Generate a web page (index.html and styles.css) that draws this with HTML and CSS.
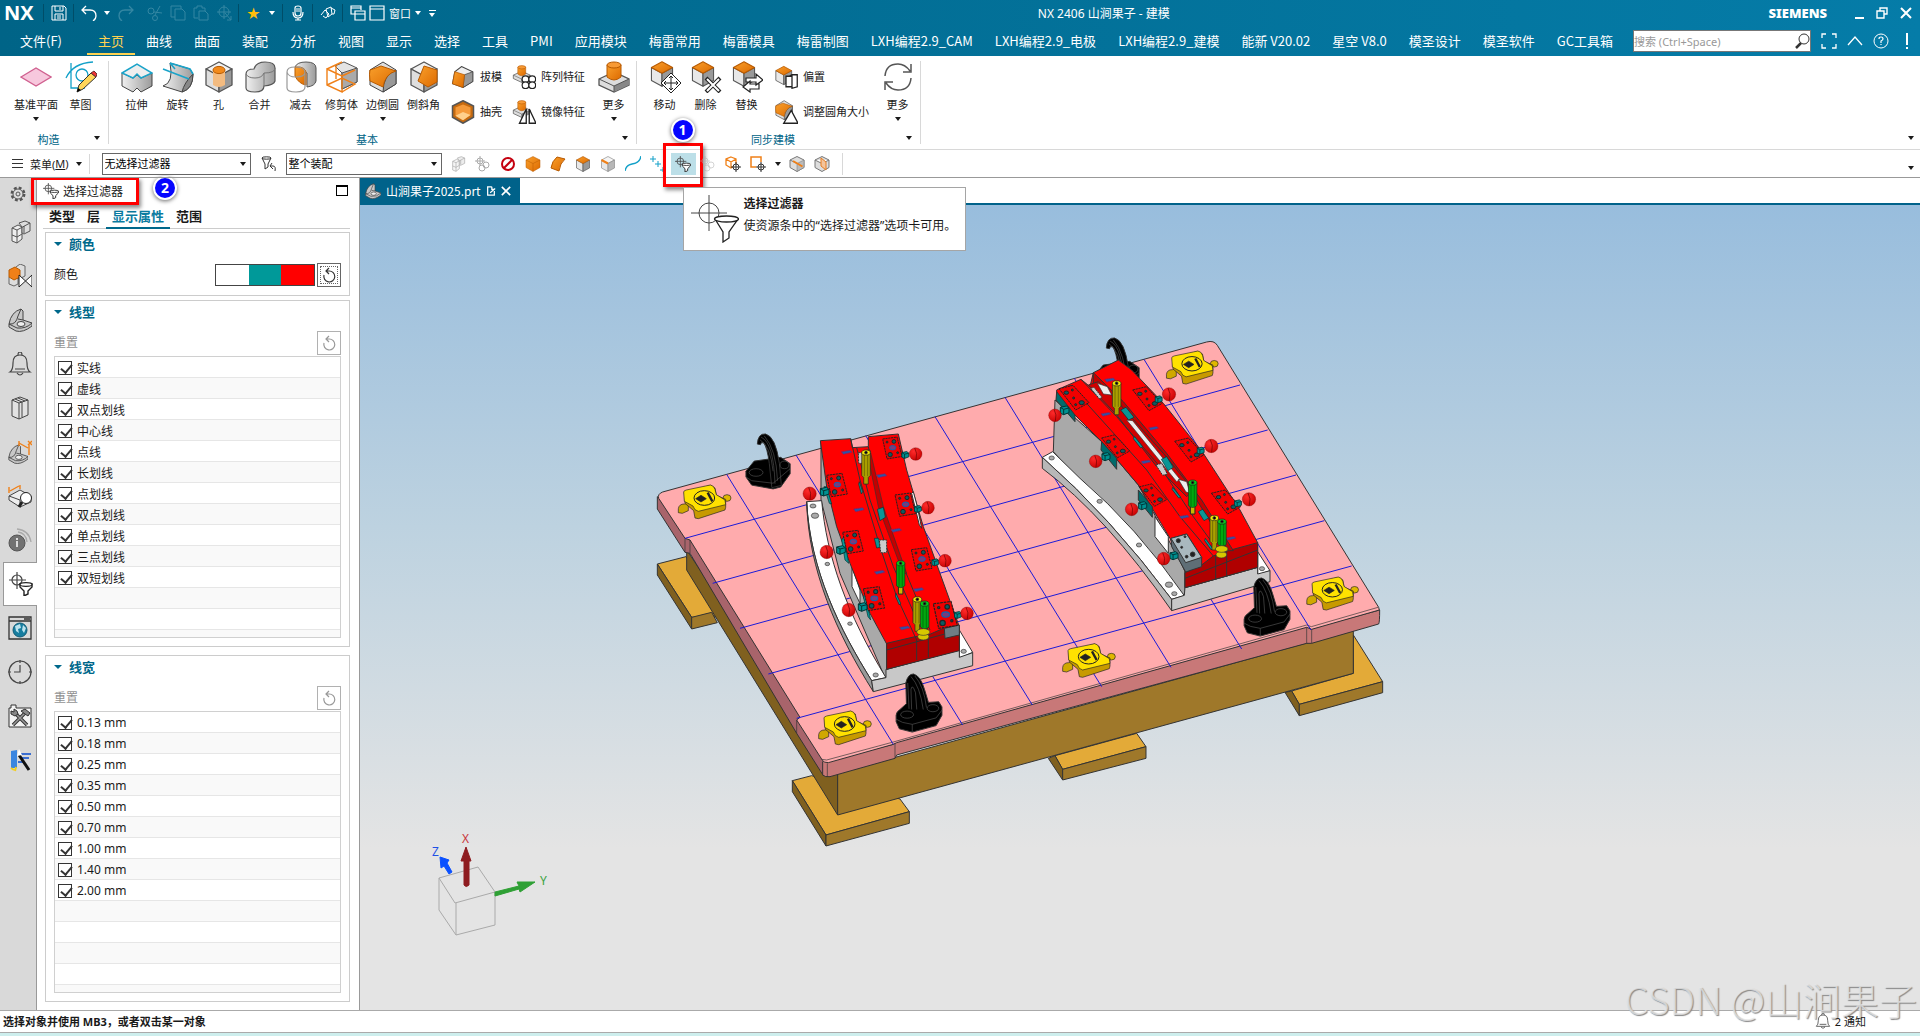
FILE: index.html
```html
<!DOCTYPE html>
<html lang="zh-CN">
<head>
    <meta charset="UTF-8">
    <meta name="viewport" content="width=device-width, initial-scale=1.0">
    <title>NX 2406 山涧果子 - 建模</title>
    <link rel="stylesheet" href="styles.css">
</head>
<body>
    <!-- Icon library -->
    <svg class="defs" aria-hidden="true">
        <defs>
            <linearGradient id="gOrange" x1="0" y1="0" x2="1" y2="1"><stop offset="0" stop-color="#f9a02c"/><stop offset="1" stop-color="#dd6a00"/></linearGradient>
            <linearGradient id="gGray" x1="0" y1="0" x2="1" y2="0"><stop offset="0" stop-color="#f0f0f0"/><stop offset="1" stop-color="#9b9b9b"/></linearGradient>
            <radialGradient id="gBall" cx=".35" cy=".3" r=".8"><stop offset="0" stop-color="#ff2a2a"/><stop offset="1" stop-color="#c40000"/></radialGradient>
        </defs>
        <symbol id="cube" viewBox="0 0 32 32"><g stroke="#555" stroke-width="1.3" stroke-linejoin="round"><path d="M16 1 29 8 16 15 3 8z" fill="#f1f1f1"/><path d="M3 8 16 15V31L3 24z" fill="#dedede"/><path d="M29 8 16 15V31L29 24z" fill="#999"/></g></symbol>
        <symbol id="cube-top" viewBox="0 0 32 32"><g stroke="#555" stroke-width="1.3" stroke-linejoin="round"><path d="M3 8 16 15V31L3 24z" fill="#e8e8e8"/><path d="M29 8 16 15V31L29 24z" fill="#999"/><path d="M16 1 29 8 16 15 3 8z" fill="url(#gOrange)" stroke="#b85a00"/></g></symbol>
        <symbol id="plane" viewBox="0 0 32 32"><path d="M1 16 16 7 31 16 16 25z" fill="#f7c8dd" stroke="#d0608f" stroke-width="1.3"/></symbol>
        <symbol id="sketch" viewBox="0 0 32 32"><path d="M6 2V27H20M1 17Q8 2 28 1" fill="none" stroke="#12a0c8" stroke-width="1.3"/><circle cx="17" cy="14" r="6" fill="none" stroke="#12a0c8" stroke-width="1.3"/><path d="M12 31 14 24 26 12 31 16 18 28z" fill="#ffd65a" stroke="#333"/><path d="M26 12 29 10 32 13 31 16z" fill="#e33" stroke="#633"/><path d="M12 31 13 27 16 29z"/></symbol>
        <symbol id="extrude" viewBox="0 0 32 32"><path d="M1 12 12 17 16 14 20 17 31 12V25L20 31 16 27 12 31 1 25z" fill="url(#gGray)" stroke="#444"/><path d="M1 12 16 3 31 12 20 17 16 13 12 17z" fill="#eee" stroke="#1aa3c9" stroke-width="1.5"/></symbol>
        <symbol id="revolve" viewBox="0 0 32 32"><path d="M8 2 28 8 31 13Q31 28 20 31L1 25Q12 22 8 2z" fill="url(#gGray)" stroke="#444"/><path d="M31 13Q31 28 20 31Q22 22 31 13z" fill="#888" stroke="#444"/><path d="M8 2 28 8 31 13M1 8 27 18M8 2 13 8" fill="none" stroke="#1aa3c9" stroke-width="1.6"/></symbol>
        <symbol id="hole" viewBox="0 0 32 32"><use href="#cube"/><path d="M10 9V24Q16 28 22 24V9z" fill="#f3bb80"/><ellipse cx="16" cy="9" rx="6" ry="3.6" fill="#f28a1c" stroke="#b85a00"/></symbol>
        <symbol id="unite" viewBox="0 0 32 32"><path d="M2 13Q2 8 10 8 12 1 21 1 31 1 31 7V20Q30 24 20 25 20 31 11 31 2 31 2 27z" fill="url(#gGray)" stroke="#555" stroke-width="1.2"/><path d="M2 13Q4 17 11 17 18 17 20 12 31 12 31 7" fill="none" stroke="#777"/><path d="M20 12V25" stroke="#777"/></symbol>
        <symbol id="subtract" viewBox="0 0 32 32"><path d="M10 6Q12 1 21 1 31 1 31 7V20Q30 25 22 26V12z" fill="url(#gGray)" stroke="#555"/><path d="M10 6Q22 5 21 14V24Q14 23 10 15z" fill="url(#gOrange)" stroke="#b85a00"/><path d="M10 6Q2 6 2 11V27Q2 31 11 31 20 31 20 26V11M2 11Q3 16 11 16 20 16 20 11 20 6 10 6" fill="none" stroke="#999" stroke-width="1.2"/></symbol>
        <symbol id="trim" viewBox="0 0 32 32"><path d="M9 5 18 1 31 7V21L16 28V12z" fill="#e4e4e4" stroke="#555"/><path d="M16 12 31 7V21L16 28z" fill="#aaa" stroke="#555"/><path d="M1 8 16 15V31L1 24zM1 8 16 1M16 15 29 9M1 24 16 17 29 23 16 31M10 5V18" fill="none" stroke="#f08018" stroke-width="1.4"/></symbol>
        <symbol id="blend" viewBox="0 0 32 32"><path d="M3 9 16 1 29 9V23L16 31 3 24z" fill="#dedede" stroke="#444"/><path d="M29 9V23L16 31Q16 14 29 9z" fill="#999" stroke="#444"/><path d="M3 9Q9 7 14 5L29 10Q18 13 16 26L3 20Q2 12 3 9z" fill="url(#gOrange)" stroke="#b85a00"/></symbol>
        <symbol id="chamfer" viewBox="0 0 32 32"><use href="#cube"/><path d="M16 5 29 9V21L20 26 10 20z" fill="url(#gOrange)" stroke="#b85a00"/></symbol>
        <symbol id="draft" viewBox="0 0 32 32"><path d="M14 2 29 9V22L16 30 2 25 5 9z" fill="#eee" stroke="#444" stroke-width="1.4"/><path d="M18 13 29 9V22L16 30z" fill="#999" stroke="#444"/><path d="M5 9 18 13 16 30 2 25z" fill="url(#gOrange)" stroke="#b85a00"/></symbol>
        <symbol id="shell" viewBox="0 0 32 32"><path d="M16 1 30 8V23L16 31 2 23V8z" fill="#c56a10" stroke="#555" stroke-width="2"/><path d="M6 10 16 6 26 10V20L16 27 6 21z" fill="#f59a3a"/><path d="M16 16 26 20 16 27 6 21z" fill="#ffd08c"/></symbol>
        <symbol id="boss" viewBox="0 0 32 32"><path d="M1 18 16 11 31 18V24L16 31 1 24z" fill="#ddd" stroke="#555" stroke-width="1.3"/><path d="M31 18V24L16 31V25z" fill="#888"/><path d="M1 18 16 25 31 18M16 25V31" fill="none" stroke="#555"/><path d="M9 4V16Q16 22 23 16V4z" fill="url(#gOrange)" stroke="#b85a00"/><ellipse cx="16" cy="4" rx="7" ry="3" fill="#f79a35" stroke="#b85a00"/></symbol>
        <symbol id="pattern" viewBox="0 0 32 32"><use href="#boss" x="0" y="0" width="26" height="24"/><g fill="#fff" stroke="#222" stroke-width="1.6"><circle cx="18" cy="19" r="4.500"/><circle cx="27" cy="19" r="4.500"/><circle cx="18" cy="27" r="4.500"/><circle cx="27" cy="27" r="4.500"/></g></symbol>
        <symbol id="mirror" viewBox="0 0 32 32"><use href="#boss" x="0" y="0" width="26" height="24"/><path d="M19 12V31H10zM23 12V31H32z" fill="#fff" stroke="#222" stroke-width="1.8"/></symbol>
        <symbol id="move" viewBox="0 0 32 32"><use href="#cube-top" width="26" height="26"/><path d="M22 12 32 22 22 32 12 22z" fill="#fff" stroke="#222"/><path d="M22 15V29M15 22H29M20 17 22 15 24 17M20 27 22 29 24 27M17 20 15 22 17 24M27 20 29 22 27 24" stroke="#222" fill="none"/></symbol>
        <symbol id="delete" viewBox="0 0 32 32"><use href="#cube-top" width="26" height="26"/><path d="M16 17 30 31M30 17 16 31" stroke="#222" stroke-width="4"/><path d="M17 18 29 30M29 18 17 30" stroke="#fff" stroke-width="2"/></symbol>
        <symbol id="replace" viewBox="0 0 32 32"><use href="#cube-top" width="26" height="26"/><path d="M15 17H25V13L32 19 25 24V21H15zM28 23H19V20L12 26 19 31V28H28z" fill="#fff" stroke="#222" stroke-width="1.2"/></symbol>
        <symbol id="offset" viewBox="0 0 32 32"><use href="#cube-top" width="26" height="28"/><path d="M16 15H24V29H16zM20 15 24 13H31V29L24 31V15" fill="#fff" stroke="#222" stroke-width="1.7"/></symbol>
        <symbol id="resize" viewBox="0 0 32 32"><use href="#blend" width="27" height="27"/><path d="M23 14 32 31H13z" fill="#fff" stroke="#222" stroke-width="1.8"/></symbol>
        <symbol id="more-sync" viewBox="0 0 32 32"><path d="M3 15Q4 3 16 3 23 3 28 10M29 3V11H21M29 17Q28 29 16 29 9 29 4 22M3 29V21H11" fill="none" stroke="#555" stroke-width="1.5"/></symbol>
        <symbol id="filter" viewBox="0 0 24 24"><path d="M8 0V17M0 8H17" stroke="#444" stroke-width="1.2"/><circle cx="8" cy="8" r="5" fill="none" stroke="#444" stroke-width="1.2"/><path d="M11 12V15L15 19V24L19 22V19L23 15V12z" fill="#fff" stroke="#222" stroke-width="1.4"/><ellipse cx="17" cy="12.500" rx="6" ry="1.800" fill="#fff" stroke="#222" stroke-width="1.2"/></symbol>
        <symbol id="filter-lg" viewBox="0 0 48 48"><path d="M18 0V36M0 18H36" stroke="#444"/><circle cx="18" cy="18" r="10" fill="none" stroke="#444"/><path d="M24 24 32 37V47L38 43V37L47 24z" fill="#fff" stroke="#222" stroke-width="1.300"/><ellipse cx="35.500" cy="24" rx="12" ry="3" fill="#fff" stroke="#222" stroke-width="1.300"/></symbol>
        <symbol id="reset" viewBox="0 0 16 16"><path d="M3 8A5.500 5.500 0 1 0 8 4H5M8 1 5 4 8 7" fill="none" stroke="currentColor" stroke-width="1.200"/></symbol>
        <symbol id="save" viewBox="0 0 16 16"><path d="M1 1H13L15 3V15H1zM4 1V6H12V1M9 2V5M4 15V9H12V15M6 11H10M6 13H10" fill="none" stroke="currentColor"/></symbol>
        <symbol id="undo" viewBox="0 0 16 16"><path d="M5 1 1 5 5 9M1 5H9Q15 5 15 11 15 14 12 16" fill="none" stroke="currentColor" stroke-width="1.3"/></symbol>
        <symbol id="cut" viewBox="0 0 16 16"><circle cx="4" cy="6" r="3" fill="none" stroke="currentColor"/><circle cx="8" cy="13" r="2.500" fill="none" stroke="currentColor"/><path d="M7 7 15 8M8 10 13 1" stroke="currentColor"/></symbol>
        <symbol id="copy" viewBox="0 0 16 16"><path d="M11 4V1H1V12H5M5 4H12L15 7V15H5z" fill="none" stroke="currentColor"/></symbol>
        <symbol id="paste" viewBox="0 0 16 16"><path d="M5 13H1V3H4V1H9V3H12V6M6 6H12L15 9V15H6z" fill="none" stroke="currentColor"/></symbol>
        <symbol id="target" viewBox="0 0 16 16"><circle cx="8" cy="7" r="5" fill="none" stroke="currentColor"/><path d="M8 0V14M1 7H15M9 8 15 15M15 11V15H11" stroke="currentColor" fill="none"/></symbol>
        <symbol id="mic" viewBox="0 0 16 16"><path d="M5 3Q5 1 8 1 11 1 11 3V8Q11 11 8 11 5 11 5 8zM3 7Q3 13 8 13 13 13 13 7M8 13V15M5 15H11M6 4H10M6 6H10" fill="none" stroke="currentColor" stroke-width="1.2"/></symbol>
        <symbol id="touch" viewBox="0 0 16 16"><path d="M1 10 5 5 9 9 6 13 3 11M6 4 11 2 12 9 8 12zM11 3 15 5 14 9 12 9" fill="none" stroke="currentColor"/></symbol>
        <symbol id="windows" viewBox="0 0 16 16"><path d="M5 9H1V1H11V5M1 3H11M5 6H15V15H5zM5 9H15" fill="none" stroke="currentColor" stroke-width="1.2"/></symbol>
        <symbol id="window" viewBox="0 0 16 16"><path d="M1 1H15V15H1zM1 4H15" fill="none" stroke="currentColor" stroke-width="1.2"/></symbol>
        <symbol id="restore" viewBox="0 0 12 12"><path d="M4 4V1H11V7H8M1 4H8V11H1z" fill="none" stroke="currentColor" stroke-width="1.4"/></symbol>
        <symbol id="close" viewBox="0 0 12 12"><path d="M1 1 11 11M11 1 1 11" stroke="currentColor" stroke-width="2"/></symbol>
        <symbol id="search" viewBox="0 0 16 16"><circle cx="10" cy="6" r="5" fill="none" stroke="#333"/><path d="M7 10 2 15" stroke="#333" stroke-width="2.500"/></symbol>
        <symbol id="full" viewBox="0 0 16 16"><path d="M1 5V1H5M11 1H15V5M15 11V15H11M5 15H1V11" fill="none" stroke="currentColor" stroke-width="1.3"/></symbol>
        <symbol id="up" viewBox="0 0 16 16"><path d="M1 12 8 4 15 12" fill="none" stroke="currentColor" stroke-width="1.3"/></symbol>
        <symbol id="help" viewBox="0 0 16 16"><circle cx="8" cy="8" r="7" fill="none" stroke="currentColor"/><path d="M6 6Q6 4 8 4 10 4 10 6 10 7 8 8V10M8 11V12" fill="none" stroke="currentColor" stroke-width="1.2"/></symbol>
        <symbol id="alert" viewBox="0 0 16 16"><path d="M8 0V12M8 14V16" stroke="currentColor" stroke-width="2"/></symbol>
        <symbol id="filter-back" viewBox="0 0 16 16"><path d="M1 2 4 8V13L7 11V8L10 2" fill="none" stroke="#333"/><ellipse cx="5.500" cy="2" rx="4.500" ry="1.200" fill="none" stroke="#333"/><path d="M11 7 9 10 12 13M9 10H12Q15 10 14 15" fill="none" stroke="#333"/></symbol>
        <symbol id="blocks" viewBox="0 0 24 24"><g stroke="#555" fill="#eee"><path d="M4 8 10 5 14 7V19L9 23 4 21z"/><path d="M11 3 17 1 22 3V11L16 14 14 13V7z" fill="#ddd"/><path d="M9 10V23M4 8 9 10 22 3M4 15 9 17 14 14M16 6V13" fill="none"/></g></symbol>
        <symbol id="links" viewBox="0 0 16 16"><g fill="none" stroke="#aaa"><circle cx="5" cy="5" r="3"/><path d="M5 0V10M0 5H10"/><circle cx="11" cy="9" r="3"/><circle cx="7" cy="12" r="3"/></g></symbol>
        <symbol id="forbid" viewBox="0 0 16 16"><circle cx="8" cy="8" r="6" fill="#fff" stroke="#c4000f" stroke-width="2"/><path d="M12 4 4 12" stroke="#c4000f" stroke-width="2"/></symbol>
        <symbol id="cube-orange" viewBox="0 0 32 32"><path d="M16 1 30 8V23L16 31 2 23V8z" fill="url(#gOrange)" stroke="#b85a00"/><path d="M2 8 16 15 30 8M16 15V31" fill="none" stroke="#b85a00"/></symbol>
        <symbol id="face" viewBox="0 0 16 16"><path d="M7 1 15 3Q10 7 9 15L1 12Q2 5 7 1z" fill="url(#gOrange)" stroke="#b85a00"/></symbol>
        <symbol id="edge" viewBox="0 0 32 32"><g opacity=".7"><use href="#cube"/></g><path d="M3 8 16 15" stroke="#f08018" stroke-width="4"/></symbol>
        <symbol id="curve" viewBox="0 0 16 16"><path d="M0 15Q1 9 7 8 15 7 16 0" fill="none" stroke="#12a0c8" stroke-width="1.4"/></symbol>
        <symbol id="points" viewBox="0 0 16 16"><path d="M3 0V6M0 3H6M8 5V11M5 8H11M13 11V16M10 14H16" stroke="#12a0c8"/></symbol>
        <symbol id="cube-target" viewBox="0 0 16 16"><path d="M6 1 11 3V9L6 12 1 9V3zM1 3 6 6 11 3M6 6V12" fill="none" stroke="#f08018" stroke-width="1.3"/><circle cx="11" cy="11" r="3" fill="#fff" stroke="#333"/><path d="M11 6V16M6 11H16" stroke="#333"/></symbol>
        <symbol id="box-target" viewBox="0 0 16 16"><path d="M6 11H1V1H11V6" fill="none" stroke="#f08018" stroke-width="1.5"/><circle cx="11" cy="11" r="3" fill="#fff" stroke="#333"/><path d="M11 6V16M6 11H16" stroke="#333"/></symbol>
        <symbol id="section" viewBox="0 0 32 32"><path d="M16 1 30 8V23L16 31 2 23V8z" fill="#ddd" stroke="#777" stroke-width="2"/><path d="M16 15 30 8V23L16 31z" fill="#bbb" stroke="#777"/><path d="M2 8 16 15" stroke="#777" stroke-width="2"/><path d="M8 10 27 21" stroke="#f08018" stroke-width="4"/></symbol>
        <symbol id="section2" viewBox="0 0 32 32"><path d="M16 1 30 8V23L16 31 2 23V8zM2 8 16 15 30 8" fill="#ddd" stroke="#777" stroke-width="2"/><path d="M14 4 24 12V28L14 20z" fill="#f4c49b" stroke="#e67e22" stroke-width="2"/></symbol>
        <symbol id="gear" viewBox="0 0 16 16"><circle cx="8" cy="8" r="6.200" fill="none" stroke="#555" stroke-width="2.500" stroke-dasharray="2.800 2.070"/><circle cx="8" cy="8" r="5" fill="#ddd" stroke="#555"/><circle cx="8" cy="8" r="2" fill="none" stroke="#555"/></symbol>
        <symbol id="constraint" viewBox="0 0 24 24"><path d="M1 13V20L6 22 10 20V13M8 3 12 0 17 2V12L11 15 6 13" fill="#ddd" stroke="#666"/><path d="M1 6 7 3 12 6V13L6 16 1 13z" fill="#f08018" stroke="#b85a00"/><path d="M11 11V23L24 11V23z" fill="#fff" stroke="#222"/></symbol>
        <symbol id="part" viewBox="0 0 24 24"><path d="M1 16Q3 4 13 1L15 3V12L24 15V18Q15 25 8 23L1 19z" fill="#c8c8c8" stroke="#444"/><path d="M1 16Q8 17 10 8L13 1M1 16 9 20Q18 21 24 15M10 11 15 12" fill="none" stroke="#444"/><ellipse cx="13" cy="16" rx="4" ry="2.500" fill="#eee" stroke="#444"/></symbol>
        <symbol id="bell" viewBox="0 0 24 24"><path d="M2 20Q5 18 5 11 5 3 12 3 19 3 19 11 19 18 22 20zM9 21Q12 25 15 21M10 3Q10 0 12 0 14 0 14 3M7 17H17" fill="none" stroke="#444" stroke-width="1.2"/></symbol>
        <symbol id="books" viewBox="0 0 24 24"><path d="M4 4 12 1 20 4V19L11 23 4 20zM4 4 11 7V23M7 3 14 6V21M10 2 17 5M11 7 20 4" fill="#e2e2e2" stroke="#444"/></symbol>
        <symbol id="part-dim" viewBox="0 0 24 24"><use href="#part" y="4" width="20" height="20"/><path d="M11 1V6M11 3 20 8M21 4V15M20 1 24 5M24 1 20 5" fill="none" stroke="#f08018" stroke-width="1.400"/></symbol>
        <symbol id="measure" viewBox="0 0 24 24"><path d="M1 12 12 6 23 12V18L12 23 1 16z" fill="#eee" stroke="#444"/><path d="M1 12 12 16V23" fill="none" stroke="#444"/><path d="M1 9V3M12 1V5M2 7 11 2" stroke="#f08018" fill="none" stroke-width="1.400"/><circle cx="18" cy="14" r="5.500" fill="#fff" stroke="#222"/><path d="M14 18 11 23" stroke="#222" stroke-width="3"/></symbol>
        <symbol id="info" viewBox="0 0 24 24"><circle cx="9" cy="15" r="8" fill="#727272" stroke="#555"/><path d="M9 10V12M9 13V19" stroke="#fff" stroke-width="1.500"/><path d="M10 4Q18 5 19 14M9 1Q21 2 23 14" fill="none" stroke="#aaa" stroke-width="1.300"/></symbol>
        <symbol id="web" viewBox="0 0 24 24"><path d="M1 1H23V23H1zM1 5H23M16 3H22" fill="none" stroke="#333" stroke-width="1.300"/><circle cx="12" cy="14" r="7" fill="#177d9f" stroke="#125d78"/><path d="M7 10 12 8 13 12 10 13 11 17 8 15zM15 9 18 12 16 17 14 14z" fill="#bde3ee"/></symbol>
        <symbol id="clock" viewBox="0 0 24 24"><circle cx="12" cy="12" r="11" fill="none" stroke="#444" stroke-width="1.200"/><path d="M12 5V12H6M12 0V3M12 21V24M0 12H3M21 12H24" fill="none" stroke="#444" stroke-width="1.200"/></symbol>
        <symbol id="tools" viewBox="0 0 24 24"><path d="M1 4H3V1H8V4H23V23H1z" fill="#f4f4f4" stroke="#333"/><path d="M5 21 17 9M8 10 19 21" stroke="#333" stroke-width="3.500"/><path d="M5 21 17 9M8 10 19 21" stroke="#999" stroke-width="1.500"/><path d="M3 7V10L7 12 10 10 9 7 6 5V8zM13 7 17 5 22 9 20 12 17 10z" fill="#888" stroke="#333"/></symbol>
        <symbol id="magic" viewBox="0 0 24 24"><path d="M3 3 9 2V20H3z" fill="#3b86e0"/><path d="M10 6H23M12 10H21M10 14H16" stroke="#3b6ed0" stroke-width="2"/><path d="M11 7 21 22" stroke="#111" stroke-width="3"/><path d="M3 20 6 22M8 19 7 23" stroke="#f2ce20" stroke-width="2"/><path d="M11 1 14 7 9 8z" fill="#fff"/></symbol>

        <!-- Parts of the model -->
        <symbol id="clamp" viewBox="0 0 160 110" overflow="visible"><g stroke="#222" stroke-width="2"><path d="M2 72Q4 58 20 58L32 56V78L14 86 2 84z" fill="#d0a800"/><ellipse cx="148" cy="40" rx="12" ry="10" fill="#e0b800"/><path d="M20 24 98 2 112 10 116 32 144 44V68L142 76 62 102 52 100 48 78 22 56z" fill="#c79a00"/><path d="M18 22Q18 18 26 16L98 1Q108 2 112 14L116 30 142 46 144 60 62 80Q50 78 46 64L20 50z" fill="#ffe100"/><ellipse cx="80" cy="40" rx="31" ry="22" fill="none" stroke-width="3"/><path d="M54 42 70 32 86 42 70 52z" fill="#222"/><path d="M90 24 104 50" stroke-width="7"/></g></symbol>
        <symbol id="hook" viewBox="0 0 150 190" overflow="visible"><path d="M2 120 28 88 112 76 142 96V128L112 170 88 176 20 164 2 138z"/><path d="M38 34Q40 0 64 2 96 10 108 96L114 165 84 172 76 96Q70 46 58 30 50 26 48 36z"/><g fill="none" stroke="#555" stroke-width="2"><ellipse cx="34" cy="124" rx="22" ry="12"/><ellipse cx="124" cy="100" rx="14" ry="12"/><path d="M2 138 20 150 88 158 142 112M50 12Q90 30 94 160M60 8Q98 50 102 150M46 20Q80 40 88 120"/></g></symbol>
        <symbol id="hook-front" viewBox="0 0 150 190" overflow="visible"><path d="M0 130Q0 120 12 112L32 94 30 30Q36 2 54 2 76 8 88 50L100 90 132 88 142 104V130L124 162 50 182 10 172 0 150z"/><g fill="none" stroke="#555" stroke-width="2"><ellipse cx="34" cy="128" rx="20" ry="11"/><ellipse cx="114" cy="108" rx="18" ry="11"/><path d="M0 142 20 152 50 158 124 138 142 114M50 158V182M36 30 40 110M46 10Q74 40 84 112M58 8Q86 40 94 106M48 112 46 50Q50 30 60 60L64 112"/></g></symbol>
        <symbol id="plate" viewBox="0 0 64 72" overflow="visible"><path d="M0 6 46 0 62 62 14 70z" fill="#f00000" stroke="#222" stroke-width="3" stroke-dasharray="7 2"/><g fill="#0c5c62" stroke="#222"><circle cx="36" cy="14" r="6"/><circle cx="14" cy="16" r="3"/><circle cx="24" cy="56" r="7"/><circle cx="48" cy="50" r="3"/></g><ellipse cx="32" cy="34" rx="10" ry="7" fill="#7a3c7c" stroke="#1262b0" stroke-width="3"/></symbol>
        <symbol id="plate-r" viewBox="0 0 92 76" overflow="visible"><path d="M0 10 42 0 90 52 50 74z" fill="#f00000" stroke="#222" stroke-width="3" stroke-dasharray="7 2"/><g fill="#0c5c62" stroke="#222"><ellipse cx="22" cy="22" rx="7" ry="5"/><circle cx="40" cy="14" r="3"/><circle cx="44" cy="38" r="3"/><ellipse cx="68" cy="52" rx="8" ry="6"/><circle cx="50" cy="58" r="3"/></g></symbol>
        <symbol id="pin-y" viewBox="0 0 30 110" overflow="visible"><path d="M2 8V78L8 84V104H22V84L28 78V8z" fill="#aaa000" stroke="#222" stroke-width="2"/><path d="M10 12V80M20 12V80" stroke="#5c5800" stroke-width="2"/><ellipse cx="15" cy="8" rx="13" ry="8" fill="#f0ea00" stroke="#222" stroke-width="2"/><circle cx="15" cy="8" r="4"/></symbol>
        <symbol id="pin-g" viewBox="0 0 30 110" overflow="visible"><path d="M8 80H22V104H8z" fill="#c8b800" stroke="#222"/><path d="M2 8V78Q15 90 28 78V8z" fill="#00a810" stroke="#222" stroke-width="2"/><path d="M10 12V80M20 12V80" stroke="#005c08" stroke-width="2"/><ellipse cx="15" cy="8" rx="13" ry="8" fill="#00d018" stroke="#222" stroke-width="2"/><circle cx="15" cy="8" r="4"/></symbol>
        <symbol id="knob" viewBox="0 0 42 42" overflow="visible"><circle cx="21" cy="21" r="20" fill="url(#gBall)" stroke="#700" stroke-width="1"/><path d="M18 2Q28 18 22 40" fill="none" stroke="#600" stroke-width="2"/></symbol>
        <symbol id="block" viewBox="0 0 30 30" overflow="visible"><path d="M2 6 20 2 28 8V22L12 28 2 24z" fill="#009090" stroke="#033"/><path d="M2 6 12 12 28 8M12 12V28" fill="none" stroke="#033"/></symbol>
        <symbol id="tag" viewBox="0 0 32 12" overflow="visible"><path d="M0 4 26 0 32 6 6 12z" fill="#2a55a8" stroke="#9a1850" stroke-dasharray="4 2"/></symbol>
    </svg>

    <div class="app">
        <header class="header">
            <div class="title-row">
                <strong class="nx">NX</strong>
                <div class="quick">
                    <i class="sep"></i>
                    <button aria-label="保存"><svg><use href="#save"/></svg></button>
                    <i class="sep"></i>
                    <button aria-label="撤消"><svg><use href="#undo"/></svg></button>
                    <button class="drop" aria-label="撤消列表"></button>
                    <button class="dim flip" aria-label="重做"><svg><use href="#undo"/></svg></button>
                    <button class="dim" aria-label="剪切"><svg><use href="#cut"/></svg></button>
                    <button class="dim" aria-label="复制"><svg><use href="#copy"/></svg></button>
                    <button class="dim" aria-label="粘贴"><svg><use href="#paste"/></svg></button>
                    <button class="dim" aria-label="定位"><svg><use href="#target"/></svg></button>
                    <i class="sep"></i>
                    <button class="star" aria-label="收藏">★</button>
                    <button class="drop" aria-label="收藏列表"></button>
                    <i class="sep"></i>
                    <button aria-label="语音"><svg><use href="#mic"/></svg></button>
                    <i class="sep"></i>
                    <button aria-label="触控"><svg><use href="#touch"/></svg></button>
                    <i class="sep"></i>
                    <button aria-label="切换窗口"><svg><use href="#windows"/></svg></button>
                    <button class="window-btn"><svg><use href="#window"/></svg>窗口</button>
                    <button class="drop" aria-label="窗口列表"></button>
                    <button class="drop over" aria-label="自定义"></button>
                </div>
                <div class="title">NX 2406 山涧果子 - 建模</div>
                <strong class="siemens">SIEMENS</strong>
                <div class="win-btns">
                    <button class="min" aria-label="最小化"></button>
                    <button aria-label="还原"><svg><use href="#restore"/></svg></button>
                    <button aria-label="关闭"><svg><use href="#close"/></svg></button>
                </div>
            </div>
            <div class="menu-row">
                <nav class="menu">
                    <a href="#" class="file">文件(F)</a>
                    <a href="#" class="active">主页</a>
                    <a href="#">曲线</a>
                    <a href="#">曲面</a>
                    <a href="#">装配</a>
                    <a href="#">分析</a>
                    <a href="#">视图</a>
                    <a href="#">显示</a>
                    <a href="#">选择</a>
                    <a href="#">工具</a>
                    <a href="#">PMI</a>
                    <a href="#">应用模块</a>
                    <a href="#">梅雷常用</a>
                    <a href="#">梅雷模具</a>
                    <a href="#">梅雷制图</a>
                    <a href="#">LXH编程2.9_CAM</a>
                    <a href="#">LXH编程2.9_电极</a>
                    <a href="#">LXH编程2.9_建模</a>
                    <a href="#">能新 V20.02</a>
                    <a href="#">星空 V8.0</a>
                    <a href="#">模圣设计</a>
                    <a href="#">模圣软件</a>
                    <a href="#">GC工具箱</a>
                </nav>
                <div class="search">
                    <input type="text" aria-label="搜索" placeholder="搜索 (Ctrl+Space)">
                    <svg><use href="#search"/></svg>
                </div>
                <div class="menu-btns">
                    <button aria-label="全屏"><svg><use href="#full"/></svg></button>
                    <button aria-label="收起功能区"><svg><use href="#up"/></svg></button>
                    <button aria-label="帮助"><svg><use href="#help"/></svg></button>
                    <button aria-label="提示"><svg><use href="#alert"/></svg></button>
                </div>
            </div>
        </header>

        <div class="ribbon">
            <section class="group">
                <div class="tools">
                    <button class="tool wide arrow"><svg><use href="#plane"/></svg>基准平面</button>
                    <button class="tool"><svg><use href="#sketch"/></svg>草图</button>
                </div>
                <h2>构造</h2>
            </section>
            <section class="group">
                <div class="tools">
                    <button class="tool"><svg><use href="#extrude"/></svg>拉伸</button>
                    <button class="tool"><svg><use href="#revolve"/></svg>旋转</button>
                    <button class="tool"><svg><use href="#hole"/></svg>孔</button>
                    <button class="tool"><svg><use href="#unite"/></svg>合并</button>
                    <button class="tool"><svg><use href="#subtract"/></svg>减去</button>
                    <button class="tool arrow"><svg><use href="#trim"/></svg>修剪体</button>
                    <button class="tool arrow"><svg><use href="#blend"/></svg>边倒圆</button>
                    <button class="tool"><svg><use href="#chamfer"/></svg>倒斜角</button>
                    <div class="stack">
                        <button><svg><use href="#draft"/></svg>拔模</button>
                        <button><svg><use href="#shell"/></svg>抽壳</button>
                    </div>
                    <div class="stack">
                        <button><svg><use href="#pattern"/></svg>阵列特征</button>
                        <button><svg><use href="#mirror"/></svg>镜像特征</button>
                    </div>
                    <button class="tool more arrow"><svg><use href="#boss"/></svg>更多</button>
                </div>
                <h2>基本</h2>
            </section>
            <section class="group">
                <div class="tools">
                    <button class="tool"><svg><use href="#move"/></svg>移动</button>
                    <button class="tool"><svg><use href="#delete"/></svg>删除</button>
                    <button class="tool"><svg><use href="#replace"/></svg>替换</button>
                    <div class="stack">
                        <button><svg><use href="#offset"/></svg>偏置</button>
                        <button><svg><use href="#resize"/></svg>调整圆角大小</button>
                    </div>
                    <button class="tool more arrow"><svg><use href="#more-sync"/></svg>更多</button>
                </div>
                <h2>同步建模</h2>
            </section>
            <div class="ribbon-end"></div>
        </div>

        <div class="filter-bar">
            <button class="menu-btn"><span class="lines"></span>菜单(<u>M</u>)</button>
            <div class="pick first">
                <select aria-label="类型过滤器"><option>无选择过滤器</option></select>
            </div>
            <button aria-label="重置过滤器"><svg><use href="#filter-back"/></svg></button>
            <div class="pick">
                <select aria-label="选择范围"><option>整个装配</option></select>
            </div>
            <div class="filter-icons">
                <button class="off" aria-label="组件"><svg><use href="#blocks"/></svg></button>
                <button aria-label="链接"><svg><use href="#links"/></svg></button>
                <button aria-label="禁止"><svg><use href="#forbid"/></svg></button>
                <button aria-label="实体"><svg><use href="#cube-orange"/></svg></button>
                <button aria-label="片体"><svg><use href="#face"/></svg></button>
                <button aria-label="面"><svg><use href="#cube-top"/></svg></button>
                <button aria-label="边"><svg><use href="#edge"/></svg></button>
                <button aria-label="曲线"><svg><use href="#curve"/></svg></button>
                <button aria-label="点"><svg><use href="#points"/></svg></button>
                <div class="filter-on">
                    <button aria-label="选择过滤器"><svg><use href="#filter"/></svg></button>
                    <div class="mark"></div>
                    <div class="badge">1</div>
                    <div class="tooltip">
                        <svg><use href="#filter-lg"/></svg>
                        <div>
                            <strong>选择过滤器</strong>
                            <p>使资源条中的“选择过滤器”选项卡可用。</p>
                        </div>
                    </div>
                </div>
                <button class="off" aria-label="取消选择"><svg><use href="#links"/></svg></button>
                <button aria-label="定向"><svg><use href="#cube-target"/></svg></button>
                <button aria-label="框选"><svg><use href="#box-target"/></svg></button>
                <button class="drop" aria-label="框选列表"></button>
                <button aria-label="剖切"><svg><use href="#section"/></svg></button>
                <button aria-label="编辑截面"><svg><use href="#section2"/></svg></button>
            </div>
        </div>

        <main class="main">
            <nav class="rail">
                <button aria-label="设置"><svg><use href="#gear"/></svg></button>
                <button aria-label="装配导航器"><svg><use href="#blocks"/></svg></button>
                <button aria-label="约束导航器"><svg><use href="#constraint"/></svg></button>
                <button aria-label="部件导航器"><svg><use href="#part"/></svg></button>
                <button aria-label="通知"><svg><use href="#bell"/></svg></button>
                <button aria-label="重用库"><svg><use href="#books"/></svg></button>
                <button aria-label="PMI 导航器"><svg><use href="#part-dim"/></svg></button>
                <button aria-label="测量"><svg><use href="#measure"/></svg></button>
                <button aria-label="信息"><svg><use href="#info"/></svg></button>
                <button class="active" aria-label="选择过滤器"><svg><use href="#filter"/></svg></button>
                <button aria-label="浏览器"><svg><use href="#web"/></svg></button>
                <button aria-label="历史记录"><svg><use href="#clock"/></svg></button>
                <button aria-label="加工向导"><svg><use href="#tools"/></svg></button>
                <button aria-label="外挂"><svg><use href="#magic"/></svg></button>
            </nav>

            <aside class="panel">
                <div class="panel-head">
                    <svg><use href="#filter"/></svg>
                    <span>选择过滤器</span>
                    <button class="max" aria-label="最大化"></button>
                    <div class="mark"></div>
                    <div class="badge">2</div>
                </div>
                <nav class="tabs">
                    <a href="#">类型</a>
                    <a href="#">层</a>
                    <a href="#" class="active">显示属性</a>
                    <a href="#">范围</a>
                </nav>
                <section class="box">
                    <h3>颜色</h3>
                    <div class="row">
                        <span>颜色</span>
                        <div class="swatch"><i></i><i class="teal"></i><i class="red"></i></div>
                        <button class="reset focus" aria-label="重置颜色"><svg><use href="#reset"/></svg></button>
                    </div>
                </section>
                <section class="box fill">
                    <h3>线型</h3>
                    <div class="row off">
                        <span>重置</span>
                        <button class="reset" disabled aria-label="重置线型"><svg><use href="#reset"/></svg></button>
                    </div>
                    <div class="list">
                        <label><input type="checkbox" checked>实线</label>
                        <label><input type="checkbox" checked>虚线</label>
                        <label><input type="checkbox" checked>双点划线</label>
                        <label><input type="checkbox" checked>中心线</label>
                        <label><input type="checkbox" checked>点线</label>
                        <label><input type="checkbox" checked>长划线</label>
                        <label><input type="checkbox" checked>点划线</label>
                        <label><input type="checkbox" checked>双点划线</label>
                        <label><input type="checkbox" checked>单点划线</label>
                        <label><input type="checkbox" checked>三点划线</label>
                        <label><input type="checkbox" checked>双短划线</label>
                    </div>
                </section>
                <section class="box fill">
                    <h3>线宽</h3>
                    <div class="row off">
                        <span>重置</span>
                        <button class="reset" disabled aria-label="重置线宽"><svg><use href="#reset"/></svg></button>
                    </div>
                    <div class="list">
                        <label><input type="checkbox" checked>0.13 mm</label>
                        <label><input type="checkbox" checked>0.18 mm</label>
                        <label><input type="checkbox" checked>0.25 mm</label>
                        <label><input type="checkbox" checked>0.35 mm</label>
                        <label><input type="checkbox" checked>0.50 mm</label>
                        <label><input type="checkbox" checked>0.70 mm</label>
                        <label><input type="checkbox" checked>1.00 mm</label>
                        <label><input type="checkbox" checked>1.40 mm</label>
                        <label><input type="checkbox" checked>2.00 mm</label>
                    </div>
                </section>
            </aside>

            <section class="view">
                <div class="doc-tabs">
                    <div class="doc-tab">
                        <svg><use href="#part"/></svg>
                        <span>山涧果子2025.prt</span>
                        <svg class="small" viewBox="0 0 12 12"><path d="M7 1H2V11H10V6M7 1V4H10M5 8 11 3" fill="none" stroke="#fff" stroke-width="1.500"/></svg>
                        <button aria-label="关闭文件"><svg class="small"><use href="#close"/></svg></button>
                    </div>
                </div>
                <div class="canvas">
                    <svg class="model" viewBox="360 205 1560 805" preserveAspectRatio="xMidYMid meet" role="img" aria-label="模型">
                        <g transform="translate(640 320) scale(.33333)" stroke="#333" stroke-width="3" stroke-linejoin="round">
                            <!-- feet -->
                            <g fill="#e3aa38">
                                <path d="M52 732 138 710 250 890 155 892z"/>
                                <path d="M457 1382 515 1367 780 1437 808 1475 558 1545z"/>
                                <path d="M1245 1307 1490 1240 1518 1280 1268 1348z"/>
                                <path d="M1955 1113 2140 1060V945L2228 1085 1978 1153z"/>
                            </g>
                            <g fill="#80601f">
                                <path d="M52 732 155 892V927L52 765z"/>
                                <path d="M457 1382 558 1545V1578L457 1415z"/>
                                <path d="M1225 1315 1245 1307 1268 1348V1380z"/>
                                <path d="M1935 1117 1955 1113 1978 1153V1187z"/>
                                <path d="M140 690 593 1365V1485L140 750z"/>
                            </g>
                            <g fill="#9f782a">
                                <path d="M155 892 215 877 232 908 155 927z"/>
                                <path d="M558 1545 808 1475V1510L558 1578z"/>
                                <path d="M1268 1348 1518 1280V1315L1268 1380z"/>
                                <path d="M1978 1153 2228 1085V1118L1978 1187z"/>
                                <path d="M593 1360V1485L2140 1060V930z"/>
                            </g>
                            <!-- table -->
                            <path d="M52 530V567L135 697 150 700 470 1240 550 1367 600 1320 200 640z" fill="#a8646b"/>
                            <path d="M548 1325V1365Q555 1372 570 1370L765 1315 770 1305 2000 970H2015L2216 912Q2219 908 2219 870L2015 925 2000 920 770 1265 760 1273z" fill="#c87878"/>
                            <path d="M68 516 1700 66Q1722 60 1732 76L2216 862 2218 870 2015 928 2000 922 770 1268 760 1273 565 1328Q552 1328 548 1322L470 1200 480 1192 150 660 135 655 56 535Q52 522 68 516z" fill="#ffabad"/>
                            <path d="M545 1318 560 1320 760 1266 2000 915 2014 920 2214 862M765 1270V1315M2000 922V970M2015 928V970M470 1200V1240M135 655V697M150 660V700M562 1330V1370" fill="none" stroke-width="2"/>
                            <g fill="none" stroke="#1a1ad8" stroke-width="3">
                                <path d="M260 463 760 1273M468 405 968 1215M677 347 1177 1155M885 290 1385 1100M1095 232 1593 1042M1303 175 1805 987M1512 118 2013 930"/>
                                <path d="M135 655 1800 195M218 790 1883 330M300 925 1968 465M385 1062 2053 602M470 1195 2135 738"/>
                            </g>

                            <use href="#hook" x="312" y="340" width="150" height="180"/>
                            <use href="#hook" x="1359" y="52" width="150" height="180"/>

                            <!-- left fixture -->
                            <path d="M543 365V540L600 760 735 1073 742 1065V960L640 740z" fill="#a9a9a9"/>
                            <path d="M500 545 545 542C560 710 620 880 738 1073L695 1082C600 930 510 750 500 545z" fill="#fff"/>
                            <path d="M500 545C510 750 600 930 695 1082L700 1115C590 940 505 750 500 545z" fill="#999"/>
                            <path d="M958 930 998 997 958 1015z" fill="#fff"/>
                            <path d="M695 1082 738 1073V1048L958 990V1012L998 998V1037L700 1115z" fill="#c8c8c8"/>
                            <path d="M636 740 660 810V850L636 800z" fill="#fff"/>
                            <path d="M541 362 632 356 637 383 685 380V350L775 342 800 450 850 620 900 760 958 920V990L740 1048V972L690 880 630 730 590 620 560 500z" fill="#f00"/>
                            <path d="M740 970 825 950 865 945 910 925 958 947V992L740 1048z" fill="#b00000"/>
                            <path d="M632 356 660 480 720 680 770 830 830 960M650 383 690 540 760 740 840 920M685 380 720 540 790 740 870 930M740 990 958 930M830 960V1020M865 945V1012" fill="none"/>
                            <path d="M690 390 730 560 800 760 790 762 715 560 680 390z" fill="#c40000" stroke-width="2"/>
                            <path d="M820 515 832 560 845 625 838 615 815 520z" fill="#fff"/>
                            <path d="M913 925 958 915V945L915 955z" fill="#6f7d85"/>
                            <g fill="#0a9696" stroke="#033" stroke-width="2">
                                <path d="M658 485 668 515 664 522 656 492zM712 568 730 562 736 592 720 602zM703 655 716 655 720 682 710 684zM768 820 782 850 778 855 766 828z"/>
                                <path d="M560 500 575 552 568 550 552 500zM612 650 626 730 615 720 605 660zM676 820 692 900 684 890 670 830z"/>
                            </g>
                            <path d="M655 398H668V430H656zM718 660H740V698H722z" fill="#ccc" stroke-dasharray="6 3"/>
                            <use href="#plate" x="560" y="460" width="64" height="72"/>
                            <use href="#plate" x="608" y="631" width="64" height="72"/>
                            <use href="#plate" x="670" y="800" width="66" height="74"/>
                            <use href="#plate" x="728" y="345" width="60" height="80"/>
                            <use href="#plate" x="765" y="519" width="64" height="72"/>
                            <use href="#plate" x="813" y="683" width="66" height="72"/>
                            <use href="#plate" x="880" y="843" width="74" height="86"/>
                            <use href="#tag" x="604" y="391" width="32" height="12"/>
                            <use href="#tag" x="641" y="563" width="32" height="12"/>
                            <use href="#tag" x="703" y="751" width="32" height="12"/>
                            <use href="#tag" x="778" y="918" width="32" height="12"/>
                            <use href="#tag" x="709" y="461" width="32" height="12"/>
                            <use href="#tag" x="753" y="625" width="32" height="12"/>
                            <use href="#tag" x="820" y="803" width="32" height="12"/>
                            <use href="#block" x="539" y="500" width="30" height="30"/>
                            <use href="#block" x="588" y="675" width="30" height="30"/>
                            <use href="#block" x="653" y="846" width="30" height="30"/>
                            <use href="#block" x="784" y="390" width="24" height="30"/>
                            <use href="#block" x="822" y="552" width="24" height="30"/>
                            <use href="#block" x="874" y="712" width="24" height="30"/>
                            <use href="#block" x="942" y="870" width="24" height="30"/>
                            <use href="#knob" x="488" y="500" width="42" height="42"/>
                            <use href="#knob" x="539" y="675" width="42" height="42"/>
                            <use href="#knob" x="605" y="849" width="42" height="42"/>
                            <use href="#knob" x="807" y="382" width="40" height="40"/>
                            <use href="#knob" x="844" y="543" width="40" height="40"/>
                            <use href="#knob" x="895" y="702" width="40" height="40"/>
                            <use href="#knob" x="961" y="860" width="40" height="40"/>
                            <use href="#pin-y" x="663" y="390" width="30" height="108"/>
                            <use href="#pin-g" x="766" y="722" width="32" height="106"/>
                            <use href="#pin-y" x="817" y="830" width="30" height="110"/>
                            <use href="#pin-g" x="838" y="843" width="32" height="110"/>
                            <g fill="#d6c800" stroke-width="2"><ellipse cx="850" cy="950" rx="17" ry="10"/><ellipse cx="850" cy="936" rx="20" ry="10"/></g>
                            <g fill="#aaa" stroke-width="2"><ellipse cx="519" cy="558" rx="9" ry="6"/><ellipse cx="525" cy="587" rx="11" ry="8"/><ellipse cx="562" cy="732" rx="7" ry="5"/><ellipse cx="630" cy="911" rx="7" ry="5"/><ellipse cx="707" cy="1065" rx="8" ry="6"/><ellipse cx="971" cy="994" rx="8" ry="6"/></g>

                            <!-- right fixture -->
                            <g transform="translate(1140 0)">
                                <path d="M105 240 100 395 495 830V750L355 495 245 365z" fill="#a9a9a9"/>
                                <path d="M67 412 98 395 180 475Q350 620 493 827L455 838Q270 590 67 412z" fill="#fff"/>
                                <path d="M67 412V445Q260 590 455 872V838Q270 590 67 412z" fill="#b8b8b8"/>
                                <path d="M713 695 750 752 713 765z" fill="#fff"/>
                                <path d="M455 838 493 826 495 803 713 742V762L750 752V785L455 872z" fill="#c8c8c8"/>
                                <path d="M405 590 445 650V700L405 650z" fill="#fff"/>
                                <path d="M110 210 183 178 210 200 220 158 295 120 335 150 430 250 550 400 660 570 713 668V742L495 803V755L450 655 355 495 245 365 165 285 110 240z" fill="#f00"/>
                                <path d="M495 758 545 735 580 708 625 692 713 668V742L495 803z" fill="#b00000"/>
                                <path d="M220 158V190L300 262 430 400 530 540 625 692H640L545 540 440 400 310 245z" fill="#c40000"/>
                                <path d="M205 195 235 185 275 225 430 400 520 510 500 530 410 440 290 285z" fill="#d00000"/>
                                <path d="M232 190 262 200 275 225 250 222zM320 300 338 302 480 478 470 485zM475 478 500 485 510 520 498 516z" fill="#eee" stroke-width="2"/>
                                <path d="M150 195 245 300 380 450 480 590 580 708M183 178 290 290 420 440 520 590 600 700M495 775 713 690M587 705V778M620 692V770" fill="none"/>
                                <path d="M212 205 222 202 246 232 238 236zM408 435 425 430 442 462 428 466z" fill="#ccc" stroke-dasharray="6 3"/>
                                <g fill="#0a9696" stroke="#033" stroke-width="2">
                                    <path d="M302 270 318 262 342 292 326 300zM424 418 440 410 460 442 444 452zM535 575 548 568 566 594 552 602z"/>
                                    <path d="M344 350 368 380 362 384 340 356zM458 502 482 532 476 534 456 508zM556 655 578 685 574 690 554 662z"/>
                                </g>
                                <path d="M110 215 165 285V305L108 240zM245 365 290 415V448L243 390zM355 510 397 560V592L355 540z" fill="#006b6b"/>
                                <use href="#plate-r" x="117" y="196" width="92" height="76"/>
                                <use href="#plate-r" x="245" y="342" width="86" height="76"/>
                                <use href="#plate-r" x="358" y="488" width="84" height="76"/>
                                <use href="#plate-r" x="338" y="200" width="90" height="74"/>
                                <use href="#plate-r" x="464" y="354" width="90" height="74"/>
                                <use href="#plate-r" x="574" y="510" width="90" height="74"/>
                                <path d="M453 655 500 642 545 712V740L497 756 455 680z" fill="#5f6e76"/>
                                <path d="M453 655 500 642 545 712 497 728z" fill="#a9b8be"/>
                                <g fill="#222"><circle cx="475" cy="662" r="6"/><circle cx="495" cy="650" r="3"/><circle cx="518" cy="703" r="7"/><circle cx="485" cy="682" r="3"/><circle cx="500" cy="710" r="4"/></g>
                                <use href="#tag" x="254" y="174" width="32" height="12"/>
                                <use href="#tag" x="243" y="276" width="30" height="14"/>
                                <use href="#tag" x="386" y="318" width="30" height="14"/>
                                <use href="#tag" x="363" y="420" width="30" height="12"/>
                                <use href="#tag" x="478" y="584" width="30" height="14"/>
                                <use href="#tag" x="618" y="648" width="30" height="14"/>
                                <use href="#block" x="119" y="256" width="30" height="30"/>
                                <use href="#block" x="244" y="396" width="28" height="28"/>
                                <use href="#block" x="354" y="543" width="28" height="28"/>
                                <use href="#block" x="448" y="693" width="28" height="28"/>
                                <use href="#block" x="404" y="224" width="24" height="28"/>
                                <use href="#block" x="530" y="378" width="24" height="28"/>
                                <use href="#block" x="642" y="536" width="24" height="28"/>
                                <use href="#knob" x="85" y="266" width="40" height="40"/>
                                <use href="#knob" x="207" y="404" width="40" height="40"/>
                                <use href="#knob" x="315" y="548" width="40" height="40"/>
                                <use href="#knob" x="411" y="696" width="40" height="40"/>
                                <use href="#knob" x="426" y="202" width="42" height="42"/>
                                <use href="#knob" x="553" y="357" width="42" height="42"/>
                                <use href="#knob" x="666" y="517" width="42" height="42"/>
                                <use href="#pin-y" x="275" y="182" width="30" height="108"/>
                                <use href="#pin-g" x="502" y="480" width="32" height="108"/>
                                <use href="#pin-y" x="568" y="586" width="30" height="110"/>
                                <use href="#pin-g" x="590" y="597" width="32" height="108"/>
                                <g fill="#d6c800" stroke-width="2"><ellipse cx="604" cy="704" rx="16" ry="10"/><ellipse cx="605" cy="687" rx="19" ry="10"/></g>
                                <g fill="#aaa" stroke-width="2"><ellipse cx="95" cy="414" rx="8" ry="6"/><ellipse cx="239" cy="544" rx="8" ry="6"/><ellipse cx="357" cy="675" rx="8" ry="6"/><ellipse cx="447" cy="794" rx="11" ry="8"/><ellipse cx="463" cy="821" rx="8" ry="6"/><ellipse cx="726" cy="746" rx="8" ry="6"/></g>
                            </g>

                            <use href="#hook-front" x="768" y="1060" width="146" height="184"/>
                            <use href="#hook-front" x="1812" y="772" width="146" height="184"/>
                            <use href="#clamp" x="113" y="494" width="160" height="110"/>
                            <use href="#clamp" x="534" y="1172" width="160" height="110"/>
                            <use href="#clamp" x="1266" y="970" width="160" height="110"/>
                            <use href="#clamp" x="1575" y="92" width="162" height="108"/>
                            <use href="#clamp" x="1996" y="770" width="162" height="108"/>
                        </g>

                        <!-- view triad -->
                        <g fill="none" stroke="#aaa">
                            <path d="M439 878 478 867 495 892 455 903zM439 878V910L456 935V903M456 935 495 925V892"/>
                            <path d="M449 874 452 872 447 863 449 860 440 857 441 868 444 866z" fill="#0a50ff" stroke="#0a50ff"/>
                            <path d="M464 885V861H461L466 847 471 861H469V885Q466 888 464 885z" fill="#8e1c20" stroke="#8e1c20"/>
                            <path d="M495 892 519 886 517 882 535 882 520 892 519 889 495 896z" fill="#2fa035" stroke="#2fa035"/>
                        </g>
                        <g class="axis">
                            <text x="462" y="843" fill="#c8373c">X</text>
                            <text x="432" y="856" fill="#1e50e6">Z</text>
                            <text x="540" y="885" fill="#3aa23f">Y</text>
                        </g>
                    </svg>
                </div>
            </section>
        </main>

        <footer class="status">
            <span>选择对象并使用 MB3，或者双击某一对象</span>
            <div class="notice"><svg><use href="#bell"/></svg>2 通知</div>
        </footer>
        <div class="watermark">CSDN @山涧果子</div>
    </div>
</body>
</html>
```
FILE: styles.css
```css
* {
    margin: 0;
    padding: 0;
    box-sizing: border-box;
}

body {
    font-family: "Noto Sans", "Noto Sans CJK SC", sans-serif;
    font-size: 12px;
    color: #1a1a1a;
    background: #fff;
}

button {
    background: none;
    border: none;
    font: inherit;
    color: inherit;
    cursor: pointer;
    display: flex;
    align-items: center;
    justify-content: center;
}

a {
    color: inherit;
    text-decoration: none;
}

svg {
    display: block;
    flex: none;
}

.defs {
    position: absolute;
    width: 0;
    height: 0;
}

.app {
    position: relative;
    display: flex;
    flex-direction: column;
    height: 100vh;
    border-bottom: 3px solid #cdeeed;
    overflow: hidden;
}

/* Header */
.header {
    background: linear-gradient(90deg, #006487, #057ca8);
    color: #fff;
}

.title-row {
    display: flex;
    align-items: center;
    height: 26px;
    padding: 0 8px 0 4px;
}

.nx {
    font-family: "Open Sans", sans-serif;
    font-size: 20px;
    line-height: 26px;
    width: 36px;
}

.quick {
    display: flex;
    align-items: center;
    font-size: 11px;
}

.quick svg {
    width: 16px;
    height: 16px;
}

.quick button {
    min-width: 23px;
    height: 20px;
}

.sep {
    width: 1px;
    height: 18px;
    margin: 0 3px;
    background: #004d68;
}

.quick .dim {
    color: #3487a3;
}

.quick .flip {
    margin-right: 6px;
}

.flip svg {
    transform: scaleX(-1);
}

.quick .star {
    color: #ffbe0a;
    font-size: 16px;
    font-family: "DejaVu Sans", sans-serif;
}

.quick .drop {
    min-width: 14px;
}

.drop::after,
.arrow::after,
.group::after,
.ribbon-end::after,
.menu-btn::after,
.pick::after,
.filter-bar::after {
    content: "";
    border: 3px solid transparent;
    border-top: 4px solid currentColor;
    border-bottom: none;
}

.quick .over {
    flex-direction: column;
    gap: 2px;
}

.over::before {
    content: "";
    width: 7px;
    height: 1px;
    background: #fff;
}

.window-btn {
    gap: 4px;
}

.title {
    flex: 1;
    text-align: center;
}

.siemens {
    font-size: 13px;
    font-weight: 900;
}

.win-btns {
    display: flex;
    align-items: center;
    gap: 12px;
    margin-left: 28px;
}

.win-btns svg {
    width: 12px;
    height: 12px;
}

.min {
    width: 9px;
    height: 12px;
    border-bottom: 2px solid #fff;
}

.menu-row {
    display: flex;
    align-items: center;
    height: 30px;
    padding: 0 5px 0 9px;
}

.menu {
    display: flex;
    flex: 1;
    font-family: "Noto Sans CJK SC", sans-serif;
    font-size: 13px;
    white-space: nowrap;
}

.menu a {
    height: 28px;
    line-height: 28px;
    padding: 0 11px;
}

.menu .file {
    margin-right: 14px;
}

.menu .active {
    color: #ffd250;
    border-bottom: 2px solid #ffd250;
}

.search {
    display: flex;
    align-items: center;
    width: 178px;
    height: 22px;
    background: #fff;
    border: 1px solid #777;
}

.search input {
    flex: 1;
    min-width: 0;
    border: none;
    outline: none;
    font: inherit;
    font-size: 11px;
}

.search input::placeholder {
    color: #999;
}

.search svg,
.menu-btns svg {
    width: 16px;
    height: 16px;
}

.menu-btns {
    display: flex;
    gap: 10px;
    margin-left: 10px;
}

/* Ribbon */
.ribbon {
    display: flex;
    height: 94px;
    padding: 5px 0;
    border-bottom: 1px solid #d8d8d8;
    font-size: 11px;
    line-height: 14px;
}

.group {
    position: relative;
    padding: 0 2px 0 7px;
    border-right: 1px solid #d8d8d8;
}

.group:first-child {
    padding: 0 7px 0 12px;
}

.group::after {
    position: absolute;
    right: 8px;
    bottom: 4px;
}

.tools {
    display: flex;
    height: 71px;
}

.tool {
    width: 41px;
    flex-direction: column;
    justify-content: flex-start;
    gap: 5px;
}

.tool.wide {
    width: 48px;
}

.tool.more {
    margin-left: 5px;
}

.tool svg {
    width: 32px;
    height: 32px;
}

.stack {
    display: flex;
    flex-direction: column;
    justify-content: space-between;
    padding: 4px 3px 8px 7px;
}

.stack button {
    justify-content: flex-start;
    gap: 5px;
}

.stack svg {
    width: 24px;
    height: 24px;
}

.group h2 {
    font-size: 11px;
    font-weight: normal;
    line-height: 16px;
    color: #006487;
    text-align: center;
    padding-right: 16px;
}

.ribbon-end {
    flex: 1;
    display: flex;
    align-items: flex-end;
    justify-content: flex-end;
    padding: 0 6px 4px 0;
}

/* Selection bar */
.filter-bar {
    position: relative;
    z-index: 2;
    display: flex;
    align-items: center;
    height: 28px;
    padding: 0 6px 0 12px;
    border-bottom: 1px solid #999;
    font-size: 11px;
}

.filter-bar::after {
    margin-left: auto;
    margin-top: 8px;
}

.menu-btn {
    gap: 7px;
    padding-right: 7px;
    border-right: 1px solid #d8d8d8;
    height: 20px;
}

.menu-btn u {
    margin: 0 -7px;
}

.lines {
    width: 11px;
    height: 9px;
    border: solid #333;
    border-width: 1px 0;
    background: linear-gradient(#333, #333) center / 100% 1px no-repeat;
}

.pick {
    position: relative;
    width: 156px;
    height: 22px;
    margin-left: 9px;
}

.pick.first {
    width: 149px;
    margin: 0 10px 0 12px;
}

.pick select {
    width: 100%;
    height: 100%;
    padding: 0 2px;
    appearance: none;
    background: #fff;
    border: 1px solid #666;
    font: inherit;
}

.pick::after {
    position: absolute;
    right: 5px;
    top: 9px;
    pointer-events: none;
}

.filter-bar svg {
    width: 16px;
    height: 16px;
}

.filter-icons {
    display: flex;
    align-items: center;
    margin-left: 4px;
    padding-right: 7px;
    border-right: 1px solid #d8d8d8;
}

.filter-icons button {
    width: 25px;
    height: 22px;
}

.filter-icons .drop {
    width: 14px;
}

.off {
    opacity: .5;
}

.filter-on {
    position: relative;
    background: #bcdfe8;
}

/* Numbered callouts */
.mark {
    position: absolute;
    inset: -10px -7px -12px -8px;
    border: 3px solid #f00;
    box-shadow: 2px 3px 4px rgba(0, 0, 0, .45);
    pointer-events: none;
}

.badge {
    position: absolute;
    left: 0;
    top: -35px;
    width: 24px;
    height: 24px;
    border: 2px solid #fff;
    border-radius: 50%;
    background: #0505ff;
    box-shadow: 0 1px 4px rgba(0, 0, 0, .6);
    color: #fff;
    font: bold 14px/20px "Noto Sans", sans-serif;
    text-align: center;
}

.tooltip {
    position: absolute;
    left: 12px;
    top: 34px;
    width: 283px;
    height: 64px;
    display: flex;
    gap: 5px;
    padding: 5px 7px;
    background: #fff;
    border: 1px solid #a5a5a5;
    font-size: 12px;
    line-height: 22px;
    white-space: nowrap;
}

.filter-bar .tooltip svg {
    width: 48px;
    height: 48px;
    margin-top: 2px;
}

/* Main area */
.main {
    flex: 1;
    display: flex;
    min-height: 0;
}

.rail {
    width: 37px;
    background: #d9d9d9;
    border-right: 1px solid #999;
}

.rail button {
    width: 36px;
    height: 44px;
    padding-left: 3px;
}

.rail button:first-child {
    height: 32px;
    padding: 0;
}

.rail svg {
    width: 24px;
    height: 24px;
}

.rail button:first-child svg {
    width: 16px;
    height: 16px;
}

.rail .active {
    width: 34px;
    margin-left: 3px;
    padding: 0;
    background: #fff;
    border: 1px solid #999;
    border-right: none;
}

.panel {
    display: flex;
    flex-direction: column;
    width: 323px;
    padding: 0 9px 8px 8px;
    border-right: 1px solid #999;
    background: #fff;
}

.panel-head {
    position: relative;
    display: flex;
    align-items: center;
    gap: 4px;
    height: 27px;
    margin-left: -2px;
    padding: 0 2px 2px 0;
}

.panel-head svg {
    width: 16px;
    height: 16px;
}

.panel-head .mark {
    inset: -1px auto auto -12px;
    width: 108px;
    height: 28px;
}

.panel-head .badge {
    left: 110px;
    top: -2px;
}

.max {
    width: 12px;
    height: 11px;
    margin-left: auto;
    border: 1px solid #000;
    border-top-width: 2px;
}

.tabs {
    display: flex;
    height: 24px;
    margin-left: -2px;
    border-bottom: 1px solid #ccc;
    font-size: 13px;
    font-weight: bold;
    line-height: 22px;
}

.tabs a {
    height: 24px;
    padding: 0 6px;
}

.tabs .active {
    color: #0a7ba0;
    border-bottom: 2px solid #00688b;
}

.box {
    height: 64px;
    margin-top: 3px;
    padding: 0 8px;
    border: 1px solid #ccc;
}

.box.fill {
    flex: 1;
    display: flex;
    flex-direction: column;
    min-height: 0;
    margin-top: 4px;
    padding-bottom: 8px;
}

.box.fill + .box.fill {
    margin-top: 8px;
}

.box h3 {
    display: flex;
    align-items: center;
    gap: 7px;
    height: 21px;
    font-size: 13px;
    color: #00688b;
}

.box h3::before {
    content: "";
    border: 4px solid transparent;
    border-top-color: currentColor;
    border-bottom: none;
}

.row {
    display: flex;
    align-items: center;
    gap: 2px;
    height: 24px;
    margin-top: 9px;
}

.row span {
    flex: 1;
    padding-bottom: 2px;
}

.row.off {
    margin-bottom: 1px;
}

.swatch {
    display: flex;
    width: 100px;
    height: 22px;
    border: 1px solid #444;
}

.swatch i {
    flex: 1;
}

.teal {
    background: #009999;
}

.red {
    background: #f00;
}

.reset {
    width: 24px;
    height: 24px;
    border: 1px solid #666;
    color: #333;
}

.reset svg {
    width: 16px;
    height: 16px;
}

.reset.focus {
    outline: 1px dotted #666;
    outline-offset: -4px;
}

.list {
    flex: 1;
    min-height: 0;
    overflow: hidden;
    border: 1px solid #d0d0d0;
    background: repeating-linear-gradient(#fff 0 20px, #e6e6e6 20px 21px, #f9f9f9 21px 41px, #e6e6e6 41px 42px);
}

.list label {
    display: flex;
    align-items: center;
    gap: 5px;
    height: 21px;
    padding-left: 3px;
}

.list input {
    appearance: none;
    width: 14px;
    height: 14px;
    border: 1px solid #333;
    background: #fff;
}

.list input:checked::after {
    content: "";
    display: block;
    width: 5px;
    height: 9px;
    margin-left: 4px;
    border: solid #333;
    border-width: 0 2px 2px 0;
    transform: rotate(40deg);
}

/* Graphics window */
.view {
    flex: 1;
    display: flex;
    flex-direction: column;
    min-width: 0;
}

.doc-tabs {
    height: 27px;
    border-bottom: 2px solid #00628a;
}

.doc-tab {
    display: flex;
    align-items: center;
    gap: 5px;
    width: 160px;
    height: 25px;
    padding: 0 6px 0 5px;
    background: #00628a;
    color: #fff;
    font-family: "Noto Sans CJK SC", sans-serif;
    white-space: nowrap;
}

.doc-tab svg {
    width: 16px;
    height: 16px;
}

.doc-tab .small {
    width: 10px;
    height: 10px;
}

.canvas {
    flex: 1;
    min-height: 0;
    background: linear-gradient(#98bddd, #bdd2e0 40%, #e4e4e4 80%);
}

.model {
    width: 100%;
    height: 100%;
}

.axis {
    font-size: 12px;
}

/* Status bar */
.status {
    display: flex;
    align-items: center;
    justify-content: space-between;
    height: 23px;
    padding: 0 54px 2px 3px;
    border-top: 1px solid #aaa;
    border-bottom: 1px solid #aaa;
    font-size: 11px;
}

.status span {
    font-weight: bold;
}

.notice {
    position: relative;
    z-index: 1;
    display: flex;
    align-items: center;
    gap: 4px;
}

.notice svg {
    width: 16px;
    height: 16px;
}

.watermark {
    position: absolute;
    right: 3px;
    bottom: 10px;
    color: rgba(232, 232, 232, .75);
    font: 300 38px/48px "Noto Sans CJK SC", sans-serif;
    text-shadow: 1px 1px 1px #888;
    pointer-events: none;
}
```
